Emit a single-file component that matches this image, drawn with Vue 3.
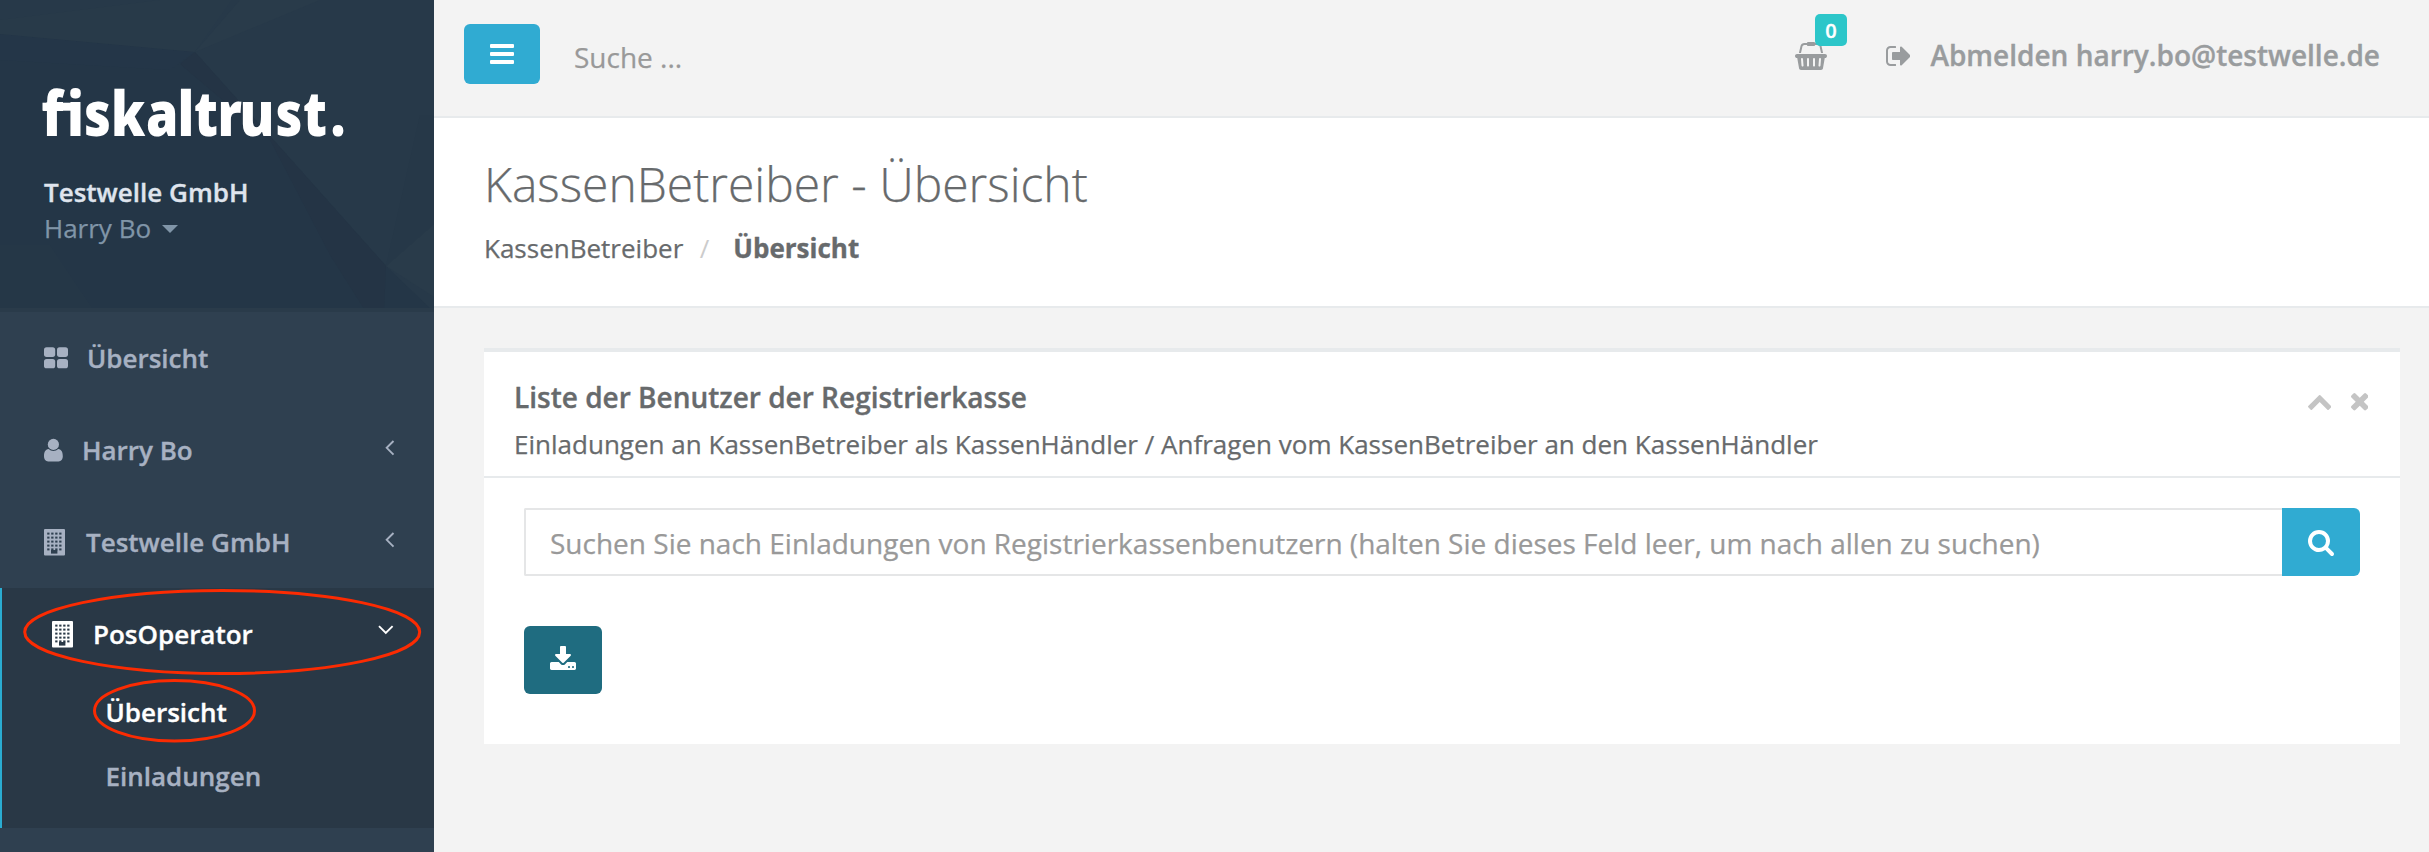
<script setup>
const menu = [
  { label: 'Übersicht', icon: 'grid' },
  { label: 'Harry Bo', icon: 'user', arrow: true },
  { label: 'Testwelle GmbH', icon: 'building', arrow: true },
]
const subItems = [
  { label: 'Übersicht', current: true },
  { label: 'Einladungen', current: false },
]
const cols = [3.2, 7.2, 11.2, 15.2]
const rows = [3.6, 7.6, 11.6, 15.6, 19.4]
// Pen positions of the wordmark's letters, before the 0.84 horizontal condensing
const logoX = [0, 25, 42, 69, 104, 135.5, 152, 175.5, 197.5, 233.5, 261, 288.5].map((x) => (x / 0.84).toFixed(1)).join(' ')
</script>

<template>
  <div class="page">
    <aside class="sidebar">
      <div class="profile">
        <svg class="facets" viewBox="0 0 434 312" preserveAspectRatio="none">
          <rect width="434" height="312" fill="#243647" />
          <polygon points="0,0 434,0 434,312 386,266 195,52 0,34" fill="#273949" />
          <polygon points="0,34 195,52 170,70 0,60" fill="#243648" />
          <polygon points="195,52 232,0 160,0 0,20 0,34" fill="#283a49" />
          <polygon points="195,52 240,0 320,0" fill="#293b4a" />
          <polygon points="195,52 386,266 384,312 366,312 330,255 270,140 180,64" fill="#243445" />
          <polygon points="386,266 434,224 434,297" fill="#293b4a" />
          <polygon points="386,266 420,115 434,115 434,224" fill="#263848" />
          <polygon points="0,245 50,245 95,312 0,312" fill="#253747" />
          <rect y="308" width="434" height="4" fill="#2a3b4a" />
        </svg>
        <svg class="logo" width="320" height="64" viewBox="0 0 320 64">
          <text :x="logoX" y="56" transform="scale(0.84 1)">fiskaltrust.</text>
          <rect x="0.5" y="22.700" width="37.500" height="8" />
        </svg>
        <div class="company">Testwelle GmbH</div>
        <div class="person">Harry Bo <i class="caret"></i></div>
      </div>

      <nav>
        <a v-for="m in menu" :key="m.label" class="item">
          <svg v-if="m.icon === 'grid'" class="ico grid" width="24" height="22" viewBox="0 0 24 22">
            <rect x="0" y="0.3" width="11.2" height="9.6" rx="2.6" /><rect x="13" y="0.3" width="11" height="9.6" rx="2.6" />
            <rect x="0" y="11.9" width="11.2" height="9.4" rx="2.6" /><rect x="13" y="11.9" width="11" height="9.4" rx="2.6" />
          </svg>
          <svg v-else-if="m.icon === 'user'" class="ico user" width="19" height="24" viewBox="0 0 19 24">
            <path d="M4.6 11C1.2 11.2 0 14.500 0 18.200C0 21.200 1.700 23.400 4.200 23.400H14.600C17.100 23.400 18.800 21.200 18.800 18.200C18.800 14.500 17.600 11.200 14.200 11A7 7 0 0 1 4.600 11Z" />
            <circle cx="9.400" cy="6.400" r="5.600" />
          </svg>
          <svg v-else class="ico building" width="21" height="27" viewBox="0 0 21 27">
            <rect width="21" height="26.500" rx="1" />
            <g class="holes">
              <template v-for="y in rows" :key="y"><rect v-for="x in cols" :key="x" :x="x" :y="y" width="2.300" height="2" /></template>
              <rect x="7" y="21" width="6.400" height="3.600" />
            </g>
          </svg>
          <span>{{ m.label }}</span>
          <svg v-if="m.arrow" class="arrow" width="10" height="16" viewBox="0 0 10 16"><path d="M8.500 1L1.700 7.800L8.500 14.600" /></svg>
        </a>

        <div class="active">
          <a class="item">
            <svg class="ico building" width="21" height="27" viewBox="0 0 21 27">
              <rect width="21" height="26.500" rx="1" />
              <g class="holes">
                <template v-for="y in rows" :key="y"><rect v-for="x in cols" :key="x" :x="x" :y="y" width="2.300" height="2" /></template>
                <rect x="7" y="21" width="6.400" height="3.600" />
              </g>
            </svg>
            <span>PosOperator</span>
            <svg class="arrow down" width="16" height="10" viewBox="0 0 16 10"><path d="M1 1.200L7.800 8L14.600 1.200" /></svg>
          </a>
          <a v-for="s in subItems" :key="s.label" class="sub" :class="{ current: s.current }">{{ s.label }}</a>
        </div>
      </nav>

      <svg class="marks" width="434" height="852" viewBox="0 0 434 852">
        <ellipse cx="222.200" cy="632" rx="197.500" ry="41.500" />
        <ellipse cx="174.500" cy="710.700" rx="80" ry="30.200" />
      </svg>
    </aside>

    <main>
      <header class="topbar">
        <button class="toggle"><i></i><i></i><i></i></button>
        <input class="quick" placeholder="Suche ..." />
        <div class="cart">
          <svg width="32" height="28" viewBox="0 0 2048 1792"><path d="M1920 768q53 0 90.500 37.500t37.500 90.500-37.500 90.500-90.500 37.500h-15l-115 662q-8 46-44 76t-82 30h-1280q-46 0-82-30t-44-76l-115-662h-15q-53 0-90.500-37.500t-37.500-90.500 37.500-90.500 90.500-37.500h1792zm-1435 800q26-2 43.500-22.500t15.500-46.500l-32-416q-2-26-22.500-43.500t-46.500-15.500-43.500 22.500-15.500 46.500l32 416q2 25 20.500 42t43.500 17h5zm411-64v-416q0-26-19-45t-45-19-45 19-19 45v416q0 26 19 45t45 19 45-19 19-45zm384 0v-416q0-26-19-45t-45-19-45 19-19 45v416q0 26 19 45t45 19 45-19 19-45zm352 5l32-416q2-26-15.500-46.500t-43.500-22.500-46.500 15.500-22.500 43.500l-32 416q-2 26 15.500 46.500t43.500 22.500h5q25 0 43.500-17t20.500-42zm-1156-1217l-93 412h-132l101-441q19-88 89-143.500t160-55.500h167q0-26 19-45t45-19h384q26 0 45 19t19 45h167q90 0 160 55.500t89 143.500l101 441h-132l-93-412q-11-44-45.500-72t-79.500-28h-167q0 26-19 45t-45 19h-384q-26 0-45-19t-19-45h-167q-45 0-79.500 28t-45.500 72z" /></svg>
          <span class="badge">0</span>
        </div>
        <a class="logout">
          <svg width="24.500" height="20" viewBox="64 256 1568 1280"><path d="M704 1440q0 4 1 20t.5 26.500-3 23.500-10 19.500-20.500 6.500h-320q-119 0-203.500-84.500t-84.500-203.500v-704q0-119 84.500-203.500t203.500-84.500h320q13 0 22.500 9.500t9.500 22.500q0 4 1 20t.5 26.500-3 23.500-10 19.500-20.500 6.500h-320q-66 0-113 47t-47 113v704q0 66 47 113t113 47h312l11.500 1 11.500 3 8 5.500 7 9 2 13.500zm928-544q0 26-19 45l-544 544q-19 19-45 19t-45-19-19-45v-288h-448q-26 0-45-19t-19-45v-384q0-26 19-45t45-19h448v-288q0-26 19-45t45-19 45 19l544 544q19 19 19 45z" /></svg>
          <span>Abmelden harry.bo@testwelle.de</span>
        </a>
      </header>

      <section class="heading">
        <h2>KassenBetreiber - Übersicht</h2>
        <div class="crumbs"><span>KassenBetreiber</span><i>/</i><strong>Übersicht</strong></div>
      </section>

      <section class="card">
        <div class="card-head">
          <div>
            <h5>Liste der Benutzer der Registrierkasse</h5>
            <p>Einladungen an KassenBetreiber als KassenHändler / Anfragen vom KassenBetreiber an den KassenHändler</p>
          </div>
          <div class="tools">
            <svg class="up" width="23.400" height="15" viewBox="90 480 1612 1035"><path d="M1683 1331l-166 165q-19 19-45 19t-45-19l-531-531-531 531q-19 19-45 19t-45-19l-166-165q-19-19-19-45.500t19-45.500l742-741q19-19 45-19t45 19l742 741q19 19 19 45.500t-19 45.500z" /></svg>
            <svg width="17.500" height="17.500" viewBox="302 366 1188 1188"><path d="M1490 1322q0 40-28 68l-136 136q-28 28-68 28t-68-28l-294-294-294 294q-28 28-68 28t-68-28l-136-136q-28-28-28-68t28-68l294-294-294-294q-28-28-28-68t28-68l136-136q28-28 68-28t68 28l294 294 294-294q28-28 68-28t68 28l136 136q28 28 28 68t-28 68l-294 294 294 294q28 28 28 68z" /></svg>
          </div>
        </div>
        <div class="card-body">
          <div class="search">
            <input placeholder="Suchen Sie nach Einladungen von Registrierkassenbenutzern (halten Sie dieses Feld leer, um nach allen zu suchen)" />
            <button>
              <svg width="26" height="26" viewBox="64 128 1664 1664"><path d="M1216 832q0-185-131.500-316.500t-316.500-131.500-316.500 131.500-131.500 316.500 131.500 316.500 316.500 131.500 316.500-131.500 131.500-316.500zm512 832q0 52-38 90t-90 38q-54 0-90-38l-343-342q-179 124-399 124-143 0-273.500-55.500t-225-150-150-225-55.500-273.500 55.500-273.500 150-225 225-150 273.500-55.500 273.500 55.500 225 150 150 225 55.500 273.500q0 220-124 399l343 343q37 37 37 90z" /></svg>
            </button>
          </div>
          <button class="download">
            <svg width="26" height="24" viewBox="64 0 1664 1536"><path d="M1344 1344q0-26-19-45t-45-19-45 19-19 45 19 45 45 19 45-19 19-45zm256 0q0-26-19-45t-45-19-45 19-19 45 19 45 45 19 45-19 19-45zm128-224v320q0 40-28 68t-68 28h-1472q-40 0-68-28t-28-68v-320q0-40 28-68t68-28h465l135 136q58 56 136 56t136-56l136-136h464q40 0 68 28t28 68zm-325-569q17 41-14 70l-448 448q-18 19-45 19t-45-19l-448-448q-31-29-14-70 17-39 59-39h256v-448q0-26 19-45t45-19h256q26 0 45 19t19 45v448h256q42 0 59 39z" /></svg>
          </button>
        </div>
      </section>
    </main>
  </div>
</template>

<style>
body { margin: 0; background: #f3f3f3; }
</style>

<style scoped>
.page, .page * { box-sizing: border-box; }
.page { display: flex; width: 2429px; height: 852px; overflow: hidden; background: #f3f3f3; font: 26px/36px "Open Sans", "Noto Sans", sans-serif; color: #676a6c; }
svg { display: block; flex: none; fill: currentColor; }
button { border: 0; padding: 0; color: #fff; background: #30abd2; display: flex; align-items: center; justify-content: center; }
input { border: 0; padding: 0; outline: 0; background: none; font: 28px/40px "Open Sans", "Noto Sans", sans-serif; color: #676a6c; }
input::placeholder { color: #999; opacity: 1; }
h2, h5, p { margin: 0; }
.page span, .company, .sub, h5, strong { -webkit-text-stroke: 0.35px currentColor; }
.page p, .person, input, h2, .crumbs span:first-child { -webkit-text-stroke: 0.25px currentColor; }
input { -webkit-text-stroke-color: #999; }

.sidebar { position: relative; flex: none; width: 434px; height: 852px; background: #2f4050; }
.profile { position: relative; height: 312px; padding: 80px 0 0 44px; }
.facets { position: absolute; left: 0; top: 0; width: 434px; height: 312px; }
.logo, .company, .person { position: relative; }
.logo { margin-left: -2px; overflow: visible; fill: #fff; }
.logo text { font: 800 62px "Open Sans", sans-serif; fill: #fff; font-variant-ligatures: none; }
.company { margin-top: 30px; font-weight: 600; color: #dfe4ed; }
.person { display: flex; align-items: center; color: #8095a8; }
.caret { margin: 2px 0 0 11px; border: 8px solid transparent; border-top-color: currentColor; border-bottom: 0; }

.item { display: flex; align-items: flex-start; height: 92px; padding: 28px 39px 0 44px; font-weight: 600; color: #a7b1c2; }
.ico { margin-right: 19px; }
.grid { margin-top: 7px; }
.user { margin-top: 6px; }
.building { margin-top: 5px; margin-right: 21px; }
.holes { fill: #2f4050; }
.arrow { margin: 8px 0 0 auto; fill: none; stroke: currentColor; stroke-width: 1.9; }
.arrow.down { margin-top: 9px; }
.active { height: 240px; background: #293846; border-left: 2px solid #2aacd1; }
.active .item { padding-left: 50px; padding-right: 40px; color: #fff; }
.active .building { margin-right: 20px; }
.active .holes { fill: #293846; }
.sub { display: block; height: 64px; padding: 14px 0 14px 103.500px; font-weight: 600; color: #a7b1c2; }
.sub.current { color: #fff; }
.marks { position: absolute; left: 0; top: 0; fill: none; stroke: #fb2b02; stroke-width: 3; }

main { flex: 1; min-width: 0; }
.topbar { display: flex; align-items: flex-start; height: 118px; padding: 24px 49px 0 30px; border-bottom: 2px solid #e7eaec; color: #999c9e; }
.toggle { width: 76px; height: 60px; border-radius: 6px; flex-direction: column; gap: 4px; }
.toggle i { width: 24px; height: 4px; border-radius: 1px; background: #fff; }
.quick { width: 400px; height: 40px; margin: 13px 0 0 34px; }
.cart { position: relative; margin: 18px 59px 0 auto; }
.badge { position: absolute; left: 20px; top: -28px; width: 32px; height: 32px; border-radius: 5px; background: #2cc6c9; color: #fff; font-size: 20px; line-height: 32px; font-weight: 600; text-align: center; padding-top: 1px; }
.logout { display: flex; font-size: 28px; line-height: 40px; font-weight: 600; }
.logout svg { margin: 22px 20px 0 0; }
.logout span { margin-top: 11px; }

.heading { height: 190px; padding: 40px 0 0 50px; background: #fff; border-bottom: 2px solid #e7eaec; }
h2 { font-size: 48px; line-height: 52px; font-weight: 300; }
.crumbs { display: flex; margin-top: 20px; }
.crumbs i { margin: 0 24px 0 16.500px; font-style: normal; color: #ccc; }
.crumbs strong { font-weight: 700; }

.card { margin: 40px 29px 0 50px; height: 396px; background: #fff; border-top: 4px solid #e7eaec; }
.card-head { display: flex; justify-content: space-between; height: 126px; padding: 25px 32px 0 30px; border-bottom: 2px solid #e7eaec; }
h5 { font-size: 28px; line-height: 40px; font-weight: 600; }
.card-head p { margin-top: 9px; letter-spacing: 0.01px; }
.tools { display: flex; gap: 19.500px; margin-top: 16px; color: #c4c4c4; }
.up { margin-top: 2px; }
.card-body { padding: 30px 40px; }
.search { display: flex; height: 68px; }
.search input { flex: 1; height: 68px; padding: 2px 24px 0; border: 2px solid #e5e6e7; border-right: 0; border-radius: 2px 0 0 2px; }
.search button { width: 78px; height: 68px; border-radius: 0 6px 6px 0; }
.search svg { margin-top: 2px; }
.download { width: 78px; height: 68px; margin-top: 50px; border-radius: 6px; background: #1f6c80; }
.download svg { margin-bottom: 4px; }
</style>
